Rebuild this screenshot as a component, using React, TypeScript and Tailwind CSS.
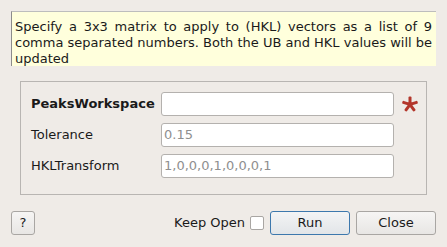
export default function App() {
    const rows = [
        { label: 'PeaksWorkspace', value: '', bold: true, required: true },
        { label: 'Tolerance', value: '0.15', bold: false, required: false },
        { label: 'HKLTransform', value: '1,0,0,0,1,0,0,0,1', bold: false, required: false },
    ]

    return (
        <div
            className="w-[447px] h-[247px] bg-[#efebe7] text-[#1a1a1a] text-[13px] flex flex-col pt-[11px]"
            style={{ fontFamily: '"DejaVu Sans", sans-serif' }}
        >
            {/* help tooltip */}
            <div className="mx-[11px] w-[425px] h-[55px] bg-[#ffffdc] border-l border-t border-l-[#8c8c8c] border-t-[#bdbdbd] pl-[3px] pr-[4px] pt-[7px] leading-[16px] text-justify">
                Specify a 3x3 matrix to apply to (HKL) vectors as a list of 9 comma separated numbers. Both the UB and HKL values will be updated
            </div>

            {/* property group */}
            <div className="ml-[20px] mt-[15px] w-[407px] h-[114px] border border-[#b8b5b2] pl-[10px] pt-[10px] flex flex-col gap-[7px]">
                {rows.map((row, index) => (
                    <div key={'row-' + index} className="flex items-center h-[24px]">
                        <span className={`w-[130px] ${row.bold ? 'font-bold' : ''}`}>{row.label}</span>
                        <div className="w-[233px] h-[24px] bg-white border border-[#b4b1ae] rounded-[3px] flex items-center px-[2px] text-[#8f8f8f]">
                            {row.value}
                        </div>
                        {row.required && (
                            <svg width="16" height="16" viewBox="0 0 16 16" className="ml-[8px]">
                                <g fill="#b3362b">
                                    <rect x="6.5" y="0.5" width="3" height="8" rx="1" transform="rotate(0 8 8.5)" />
                                    <rect x="6.5" y="0.5" width="3" height="8" rx="1" transform="rotate(72 8 8.5)" />
                                    <rect x="6.5" y="0.5" width="3" height="8" rx="1" transform="rotate(144 8 8.5)" />
                                    <rect x="6.5" y="0.5" width="3" height="8" rx="1" transform="rotate(216 8 8.5)" />
                                    <rect x="6.5" y="0.5" width="3" height="8" rx="1" transform="rotate(288 8 8.5)" />
                                    <circle cx="8" cy="8.5" r="2.4" />
                                </g>
                            </svg>
                        )}
                    </div>
                ))}
            </div>

            {/* bottom buttons */}
            <div className="mt-[16px] mx-[11px] flex items-center h-[24px]">
                <button className="w-[24px] h-[24px] border border-[#a9a6a3] rounded-[3px] bg-gradient-to-b from-[#f6f5f4] to-[#e8e6e4] text-[13px]">
                    ?
                </button>
                <div className="flex-1" />
                <span>Keep Open</span>
                <div className="ml-[5px] w-[14px] h-[14px] bg-white border border-[#a9a6a3] rounded-[2px]" />
                <button className="ml-[6px] w-[80px] h-[24px] border border-[#3d78ad] rounded-[3px] bg-gradient-to-b from-[#f3f4f5] to-[#e2e5e8]">
                    Run
                </button>
                <button className="ml-[6px] w-[80px] h-[24px] border border-[#a9a6a3] rounded-[3px] bg-gradient-to-b from-[#f6f5f4] to-[#e8e6e4]">
                    Close
                </button>
            </div>
        </div>
    )
}
